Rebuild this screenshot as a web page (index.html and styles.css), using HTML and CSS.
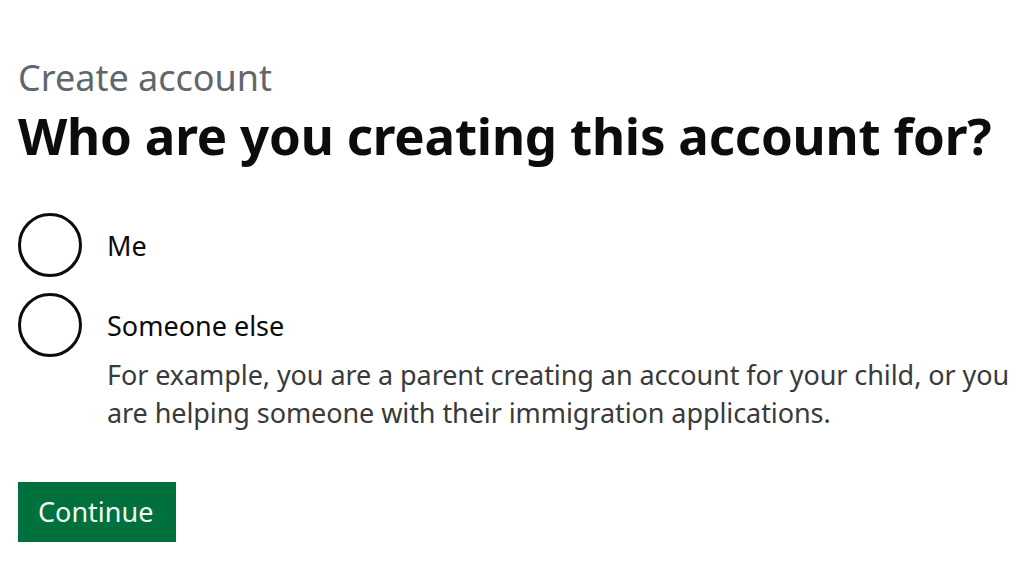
FILE: index.html
```html
<!DOCTYPE html>
<html lang="en">
<head>
	<meta charset="UTF-8">
	<meta name="viewport" content="width=device-width, initial-scale=1">
	<title>Create account</title>
	<link rel="stylesheet" href="styles.css">
</head>
<body>
	<main class="page">
		<form class="form">
			<fieldset class="fieldset">
				<legend class="legend">
					<span class="caption">Create account</span>
					<h1 class="heading">Who are you creating this account for?</h1>
				</legend>
				<div class="radios">
					<div class="radio">
						<input class="radio-input" type="radio" name="who" id="who-me" value="me">
						<label class="radio-label" for="who-me">Me</label>
					</div>
					<div class="radio">
						<input class="radio-input" type="radio" name="who" id="who-else" value="else">
						<label class="radio-label" for="who-else">Someone else</label>
						<div class="radio-hint">For example, you are a parent creating an account for your child, or you are helping someone with their immigration applications.</div>
					</div>
				</div>
			</fieldset>
			<button type="submit" class="button">Continue</button>
		</form>
	</main>
</body>
</html>
```

FILE: styles.css
```css
* {
	box-sizing: border-box;
}

body {
	margin: 0;
	font-family: 'Noto Sans', sans-serif;
	color: #0b0c0c;
	background-color: #fff;
}

.page {
	padding: 56px 18px 0;
}

.fieldset {
	margin: 0;
	padding: 0;
	border: none;
	min-width: 0;
}

.legend {
	padding: 0;
}

.caption {
	display: block;
	font-size: 36px;
	line-height: 44px;
	color: #5f676b;
}

.heading {
	margin: 7px 0 0;
	font-size: 51px;
	font-weight: 700;
	line-height: 56px;
	letter-spacing: -0.2px;
	white-space: nowrap;
}

.radios {
	display: flex;
	flex-direction: column;
	gap: 16px;
	margin-top: 50px;
}

.radio {
	display: grid;
	grid-template-columns: 64px 1fr;
	column-gap: 25px;
}

.radio-input {
	-webkit-appearance: none;
	appearance: none;
	width: 64px;
	height: 64px;
	margin: 0;
	border: 3px solid #0b0c0c;
	border-radius: 50%;
	background: #fff;
	grid-row: 1 / span 2;
}

.radio-label {
	padding-top: 15px;
	font-size: 27px;
	line-height: 36px;
}

.radio-hint {
	grid-column: 2;
	margin-top: 12px;
	font-size: 27px;
	line-height: 38px;
	letter-spacing: -0.08px;
	color: #383a3c;
}

.button {
	display: block;
	margin-top: 50px;
	width: 158px;
	padding: 12px 0 12px 20px;
	text-align: left;
	font-family: inherit;
	font-size: 27px;
	line-height: 36px;
	color: #f2faf4;
	background-color: #00703c;
	border: none;
	border-radius: 0;
	box-shadow: 0 3px 0 #002d18;
	cursor: pointer;
}
```
